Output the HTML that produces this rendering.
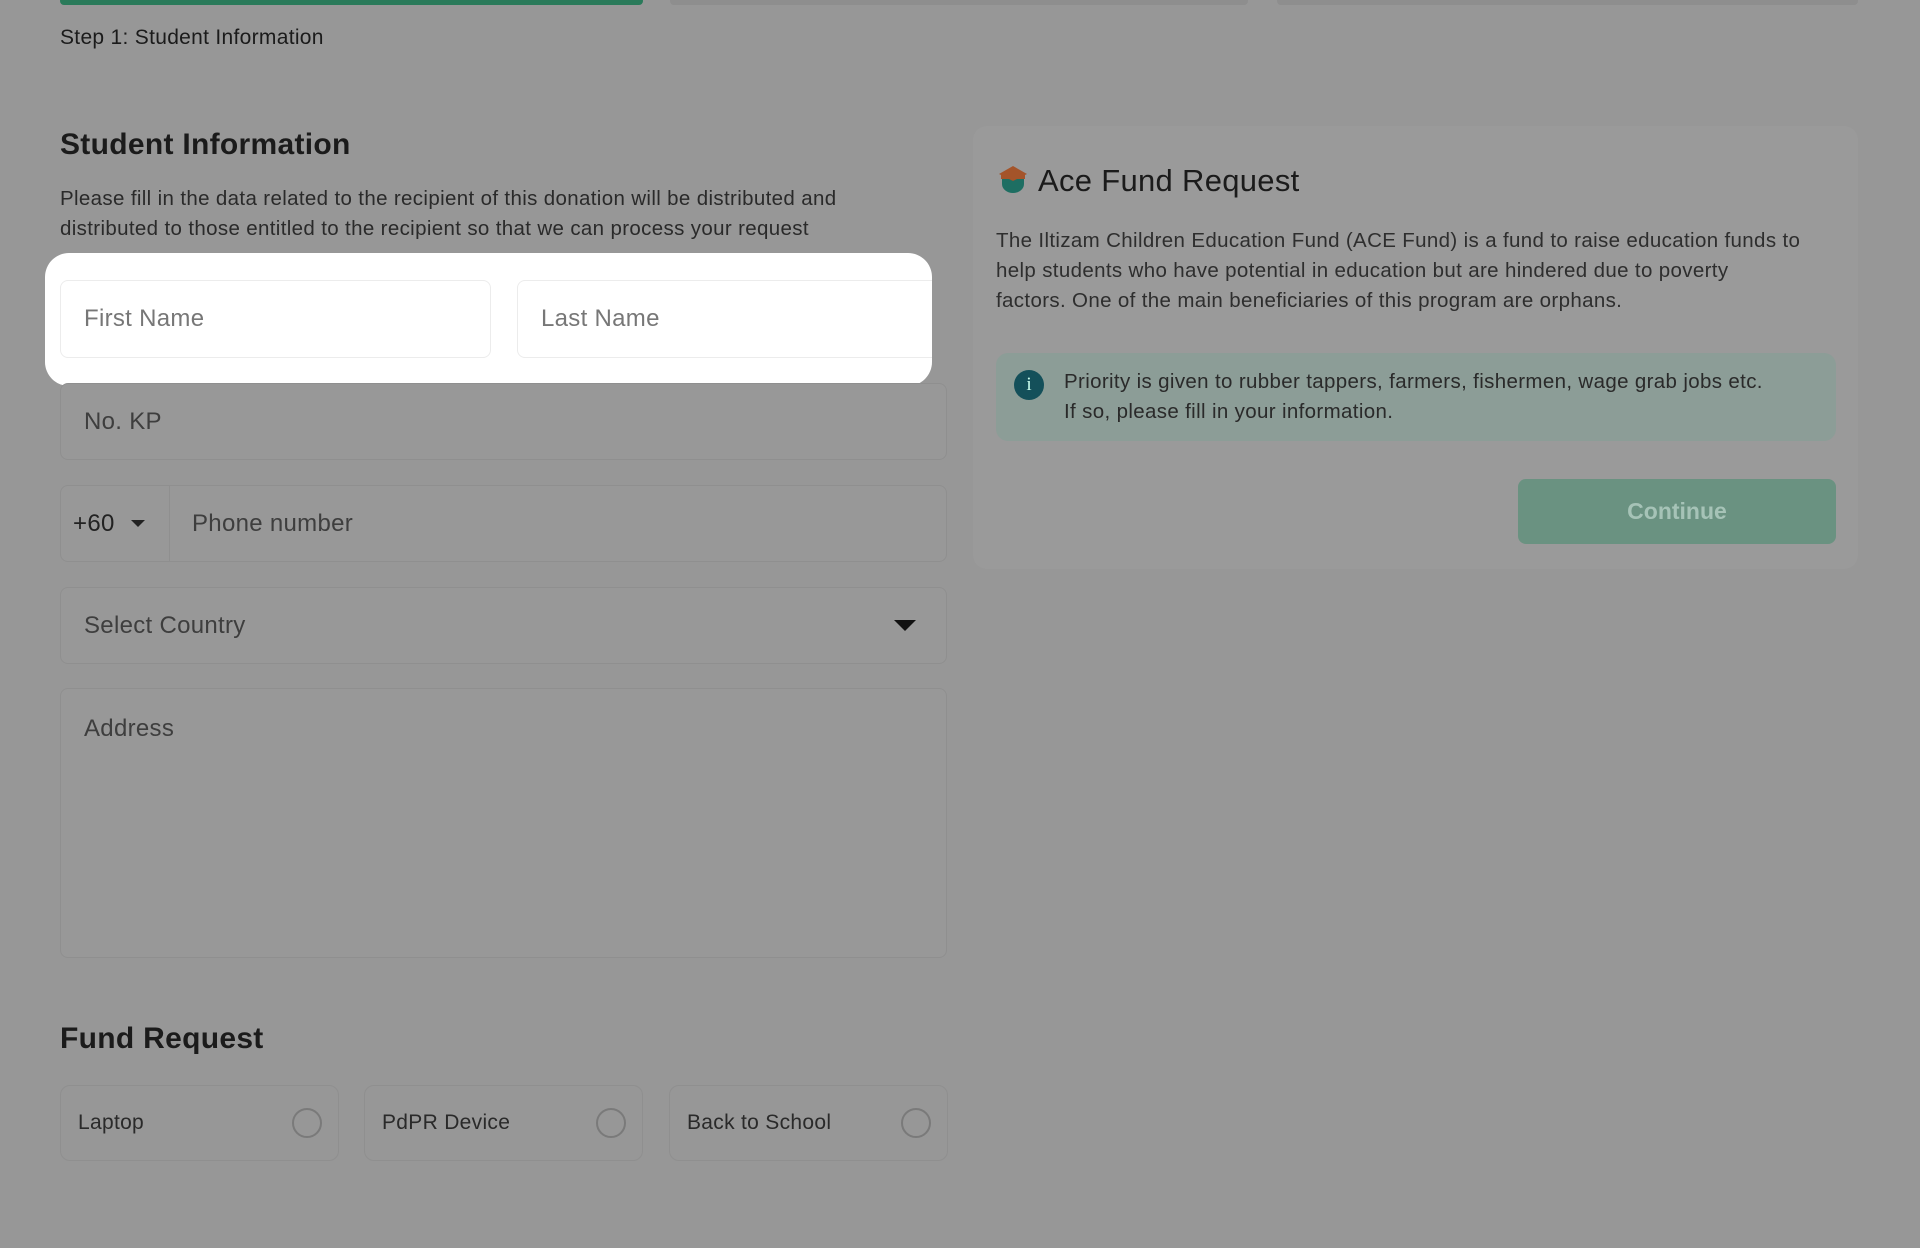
<!DOCTYPE html>
<html><head><meta charset="utf-8"><style>
*{box-sizing:border-box;margin:0;padding:0}
body{width:1920px;height:1248px;background:#979797;font-family:"Liberation Sans",sans-serif;position:relative;overflow:hidden;color:#1b1b1b}
.a{position:absolute}
.bar{top:-3px;height:8px;border-radius:4px}
.inp{position:absolute;border:1px solid #8f8f8f;border-radius:8px;background:#989898;font-size:24px;color:#3e3e3e;padding-left:23px;display:flex;align-items:center;letter-spacing:0.3px}
.radio{position:absolute;top:1085px;height:76px;width:279px;border:1px solid #8f8f8f;border-radius:10px;display:flex;align-items:center;padding-left:17px;font-size:21px;color:#2a2a2a;letter-spacing:0.3px}
.radio i{position:absolute;right:16px;top:22px;width:30px;height:30px;border:2px solid #7a7a7a;border-radius:50%}
.p{font-size:20.5px;line-height:30px;color:#2a2a2a;letter-spacing:0.35px;white-space:nowrap}
</style></head><body>
<div class="a bar" style="left:60px;width:583px;background:#2a7a5a"></div>
<div class="a bar" style="left:670px;width:578px;background:#8e8e8e"></div>
<div class="a bar" style="left:1277px;width:581px;background:#8e8e8e"></div>
<div class="a" style="left:60px;top:26px;font-size:21px;letter-spacing:0.3px">Step 1: Student Information</div>
<div class="a" style="left:60px;top:128px;font-size:30px;font-weight:bold;letter-spacing:0.3px">Student Information</div>
<div class="a p" style="left:60px;top:184px">Please fill in the data related to the recipient of this donation will be distributed and<br>distributed to those entitled to the recipient so that we can process your request</div>

<div class="a" style="left:45px;top:253px;width:887px;height:133px;background:#fff;border-radius:24px;overflow:hidden">
 <div class="inp" style="left:15px;top:27px;width:431px;height:78px;background:#fff;border-color:#ececec;color:#777">First Name</div>
 <div class="inp" style="left:472px;top:27px;width:440px;height:78px;background:#fff;border-color:#ececec;color:#777">Last Name</div>
</div>

<div class="inp" style="left:60px;top:383px;width:887px;height:77px">No. KP</div>
<div class="inp" style="left:60px;top:485px;width:887px;height:77px;padding-left:0">
 <div style="width:109px;height:100%;border-right:1px solid #8f8f8f;display:flex;align-items:center;padding-left:12px;color:#222">+60<span style="margin-left:16px;border-left:7px solid transparent;border-right:7px solid transparent;border-top:7px solid #222"></span></div>
 <span style="margin-left:22px">Phone number</span></div>
<div class="inp" style="left:60px;top:587px;width:887px;height:77px">Select Country<span style="position:absolute;right:30px;top:32px;border-left:11px solid transparent;border-right:11px solid transparent;border-top:11px solid #111"></span></div>
<div class="inp" style="left:60px;top:688px;width:887px;height:270px;align-items:flex-start;padding-top:26px">Address</div>

<div class="a" style="left:60px;top:1022px;font-size:30px;font-weight:bold;letter-spacing:0.3px">Fund Request</div>
<div class="radio" style="left:60px">Laptop<i></i></div>
<div class="radio" style="left:364px">PdPR Device<i></i></div>
<div class="radio" style="left:669px">Back to School<i></i></div>

<div class="a" style="left:973px;top:126px;width:885px;height:443px;background:#9a9a9a;border-radius:14px"></div>
<svg class="a" style="left:998px;top:164px" width="30" height="32" viewBox="0 0 30 32"><path d="M4 14h22v6a11 9 0 0 1-22 0z" fill="#1e6e62"/><path d="M15 2 L29 10 L15 17 L1 10Z" fill="#a4542a"/><rect x="3" y="9" width="24" height="6" fill="#a4542a"/></svg>
<div class="a" style="left:1038px;top:163px;font-size:31px;letter-spacing:0.3px">Ace Fund Request</div>
<div class="a p" style="left:996px;top:226px;color:#2e2e2e">The Iltizam Children Education Fund (ACE Fund) is a fund to raise education funds to<br>help students who have potential in education but are hindered due to poverty<br>factors. One of the main beneficiaries of this program are orphans.</div>
<div class="a" style="left:996px;top:353px;width:840px;height:88px;background:#8c9d97;border-radius:12px"></div>
<div class="a" style="left:1014px;top:370px;width:30px;height:30px;border-radius:50%;background:#14505a;color:#cfe;font-size:19px;text-align:center;line-height:30px;font-family:'Liberation Serif',serif">i</div>
<div class="a p" style="left:1064px;top:367px">Priority is given to rubber tappers, farmers, fishermen, wage grab jobs etc.<br>If so, please fill in your information.</div>
<div class="a" style="left:1518px;top:479px;width:318px;height:65px;background:#6a9281;border-radius:8px;color:#a6c3b7;font-size:23px;font-weight:bold;text-align:center;line-height:65px">Continue</div>
</body></html>
